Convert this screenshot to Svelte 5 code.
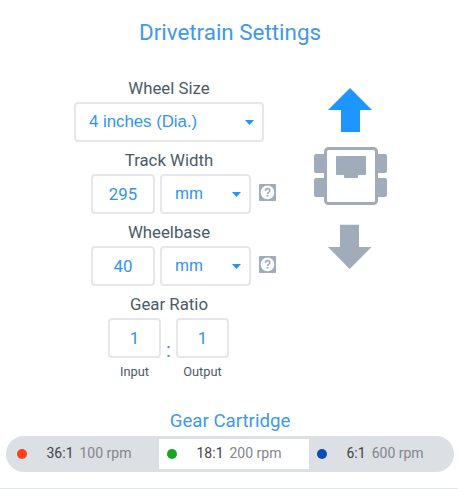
<script>
  const cartridges = [
    { ratio: '36:1', rpm: '100 rpm', color: '#ff401c' },
    { ratio: '18:1', rpm: '200 rpm', color: '#17a620', selected: true },
    { ratio: '6:1', rpm: '600 rpm', color: '#0a4db3' }
  ];
  const measures = [
    { label: 'Track Width', value: '295' },
    { label: 'Wheelbase', value: '40' }
  ];
</script>

{#snippet caret()}
  <svg class="caret" width="9" height="5" viewBox="0 0 9 5"><path d="M0 0H9L4.5 5Z" fill="#1e96ff" /></svg>
{/snippet}

<main>
  <h1>Drivetrain Settings</h1>
  <div class="content">
    <section class="form">
      <div class="label">Wheel Size</div>
      <div class="select wide"><span>4 inches (Dia.)</span>{@render caret()}</div>
      {#each measures as m}
        <div class="label">{m.label}</div>
        <div class="row">
          <div class="field">{m.value}</div>
          <div class="select"><span>mm</span>{@render caret()}</div>
          <svg class="help" width="17" height="17" viewBox="0 0 17 17">
            <rect width="17" height="17" rx=".7" fill="#a0acba" />
            <circle cx="8.5" cy="8.4" r="6.8" fill="#fff" />
            <path d="M6.3 6.8Q6.4 4.7 8.6 4.7Q10.8 4.7 10.8 6.6Q10.8 7.6 9.6 8.4Q8.6 9 8.6 10" fill="none" stroke="#a0acba" stroke-width="1.7" />
            <rect x="7.7" y="11" width="1.8" height="1.7" fill="#a0acba" />
          </svg>
        </div>
      {/each}
      <div class="label">Gear Ratio</div>
      <div class="ratio">
        <div><div class="field small">1</div><div class="caption">Input</div></div>
        <span class="colon">:</span>
        <div><div class="field small">1</div><div class="caption">Output</div></div>
      </div>
    </section>
    <svg class="robot" width="74" height="182" viewBox="314 88 74 182">
      <path d="M350 88L372 110H360V132H341V110H328Z" fill="#1e96ff" />
      <g fill="#a0acba">
        <rect x="314" y="154" width="13" height="19" rx="2" />
        <rect x="314" y="178" width="13" height="19" rx="2" />
        <rect x="375" y="154" width="12" height="19" rx="2" />
        <rect x="375" y="178" width="12" height="19" rx="2" />
        <rect x="325.5" y="148.5" width="51" height="55" rx="3" fill="#fff" stroke="#a0acba" stroke-width="3" />
        <rect x="336" y="156" width="30" height="19" rx=".7" />
        <rect x="344" y="174" width="14" height="4" rx="1" />
        <path d="M340 224.7H359V247H371.5L349.7 269L328 247H340Z" />
      </g>
    </svg>
  </div>
  <h2>Gear Cartridge</h2>
  <div class="cartridges">
    {#each cartridges as c}
      <div class="cartridge" class:selected={c.selected}>
        <i style:background={c.color}></i>
        <b>{c.ratio}</b><span>{c.rpm}</span>
      </div>
    {/each}
  </div>
</main>

<style>
  :global(body) { background: #fff; }
  main {
    box-sizing: border-box;
    width: 458px;
    height: 489px;
    overflow: hidden;
    border-bottom: 1px solid #e4e5e9;
    font-family: Roboto, sans-serif;
    color: #4a5b67;
  }
  h1, h2 { margin: 0; font-weight: 400; text-align: center; color: #3d99ee; }
  h1 { padding: 16px 0 0 2px; font-size: 22.4px; line-height: 32px; height: 22px; }
  .content { display: flex; height: 337px; margin-top: 32px; }
  .form { width: 190px; margin-left: 74px; }
  .label { height: 32px; line-height: 36px; font-size: 16.8px; text-align: center; }
  .row { display: flex; padding-left: 17px; width: 190px; }
  .field, .select {
    box-sizing: border-box;
    height: 40px;
    border: 2px solid #e6e6ec;
    border-radius: 4px;
    color: #2e93fa;
    font-size: 16.8px;
    line-height: 37px;
  }
  .field { width: 64px; text-align: center; flex: none; }
  .select {
    display: flex;
    align-items: center;
    justify-content: space-between;
    flex: none;
    width: 91px;
    margin-left: 5px;
    padding: 0 8px 0 13px;
    font: 16.8px/36px "Liberation Sans", Arial, sans-serif;
  }
  .select.wide { width: 190px; margin: 0; }
  .caret { margin-top: 1px; }
  .help { flex: none; margin: 10px 0 0 8px; }
  .ratio { display: flex; padding-left: 34px; }
  .field.small { width: 53px; }
  .colon { width: 15px; text-align: center; color: #3d99ee; font-size: 20px; line-height: 64px; height: 40px; }
  .caption { font-size: 12.8px; line-height: 27px; text-align: center; }
  .robot { flex: none; margin: 18px 0 0 50px; }
  h2 { padding-left: 2px; font-size: 18.67px; line-height: 28px; height: 29px; }
  .cartridges {
    display: flex;
    box-sizing: border-box;
    width: 448px;
    height: 36px;
    margin-left: 6px;
    padding: 3px 0 3px 3px;
    border-radius: 18px;
    background: #dcdfe3;
  }
  .cartridge { display: flex; align-items: center; box-sizing: border-box; width: 150px; height: 30px; padding-left: 8px; font-size: 14px; line-height: 18px; flex: none; }
  .selected { background: #fff; }
  i { width: 10px; height: 10px; border-radius: 50%; margin-right: 19.5px; }
  b { font-weight: 400; color: #3f444a; margin-right: 6px; }
  b, .cartridge span { margin-top: -2px; }
  .cartridge span { color: #83868b; }
</style>
